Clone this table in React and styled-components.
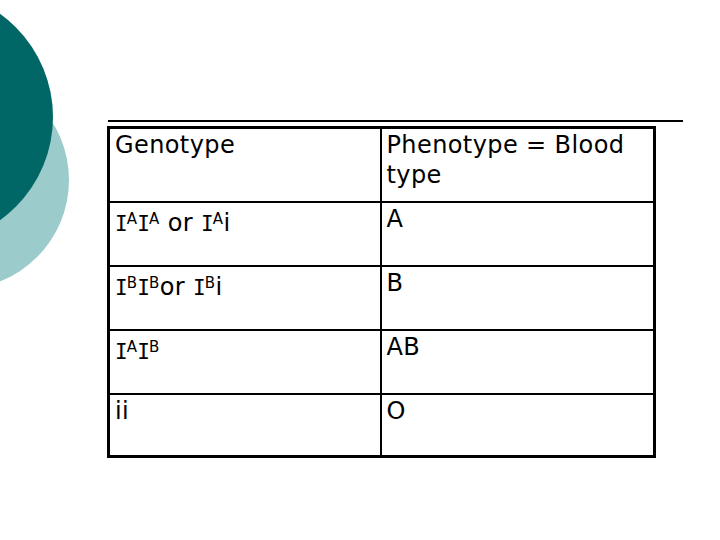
import React from 'react'
import styled, {createGlobalStyle} from 'styled-components'

const rows = [
    {geno: [['I', 'A'], ['I', 'A'], ' or ', ['I', 'A'], 'i'], pheno: 'A', h: 64},
    {geno: [['I', 'B'], ['I', 'B'], 'or ', ['I', 'B'], 'i'], pheno: 'B', h: 64},
    {geno: [['I', 'A'], ['I', 'B']], pheno: 'AB', h: 64},
    {geno: ['ii'], pheno: 'O', h: 63},
]

export default function App() {
    return (
        <Slide>
            <GlobalStyle />
            <Decor width="120" height="300" viewBox="0 0 120 300">
                <circle cx="-40" cy="180" r="109" fill="#9ccbcc" />
                <circle cx="-74" cy="117" r="127" fill="#006766" />
            </Decor>
            <Rule />
            <Table>
                <colgroup>
                    <col style={{width: 272}} />
                    <col />
                </colgroup>
                <tbody>
                    <Row $h={74}>
                        <Cell>Genotype</Cell>
                        <Cell>Phenotype = Blood type</Cell>
                    </Row>
                    {rows.map((r, i) => (
                        <Row key={i} $h={r.h}>
                            <Cell>
                                {r.geno.map((g, j) =>
                                    Array.isArray(g) ? (
                                        <span key={j}>
                                            <Allele>{g[0]}</Allele>
                                            <Sup>{g[1]}</Sup>
                                        </span>
                                    ) : (
                                        <span key={j}>{g}</span>
                                    )
                                )}
                            </Cell>
                            <Cell>{r.pheno}</Cell>
                        </Row>
                    ))}
                </tbody>
            </Table>
        </Slide>
    )
}

const GlobalStyle = createGlobalStyle`
    html, body {
        margin: 0;
        background: #ffffff;
    }
`

const Slide = styled.div`
    position: relative;
    width: 720px;
    height: 540px;
    overflow: hidden;
    background: #fff;
    padding: 120px 0 0 108px;
    box-sizing: border-box;
    font-family: "DejaVu Sans", Verdana, sans-serif;
    color: #000;
`

const Decor = styled.svg`
    position: absolute;
    left: 0;
    top: 0;
`

const Rule = styled.div`
    width: 575px;
    height: 2px;
    background: #000;
    margin-bottom: 4px;
`

const Table = styled.table`
    border-collapse: collapse;
    border: 3px solid #000;
    width: 549px;
    margin-left: -1px;
    table-layout: fixed;
`

const Row = styled.tr`
    height: ${p => p.$h}px;
`

const Cell = styled.td`
    border: 2px solid #000;
    vertical-align: top;
    padding: 1px 5px;
    font-size: 24px;
    line-height: 30px;
    letter-spacing: 0.4px;
`

const Allele = styled.span`
    font-family: "DejaVu Sans Mono", monospace;
    font-size: 21px;
    letter-spacing: -2px;
`

const Sup = styled.span`
    font-size: 15px;
    vertical-align: 7px;
    margin-left: 1px;
`
